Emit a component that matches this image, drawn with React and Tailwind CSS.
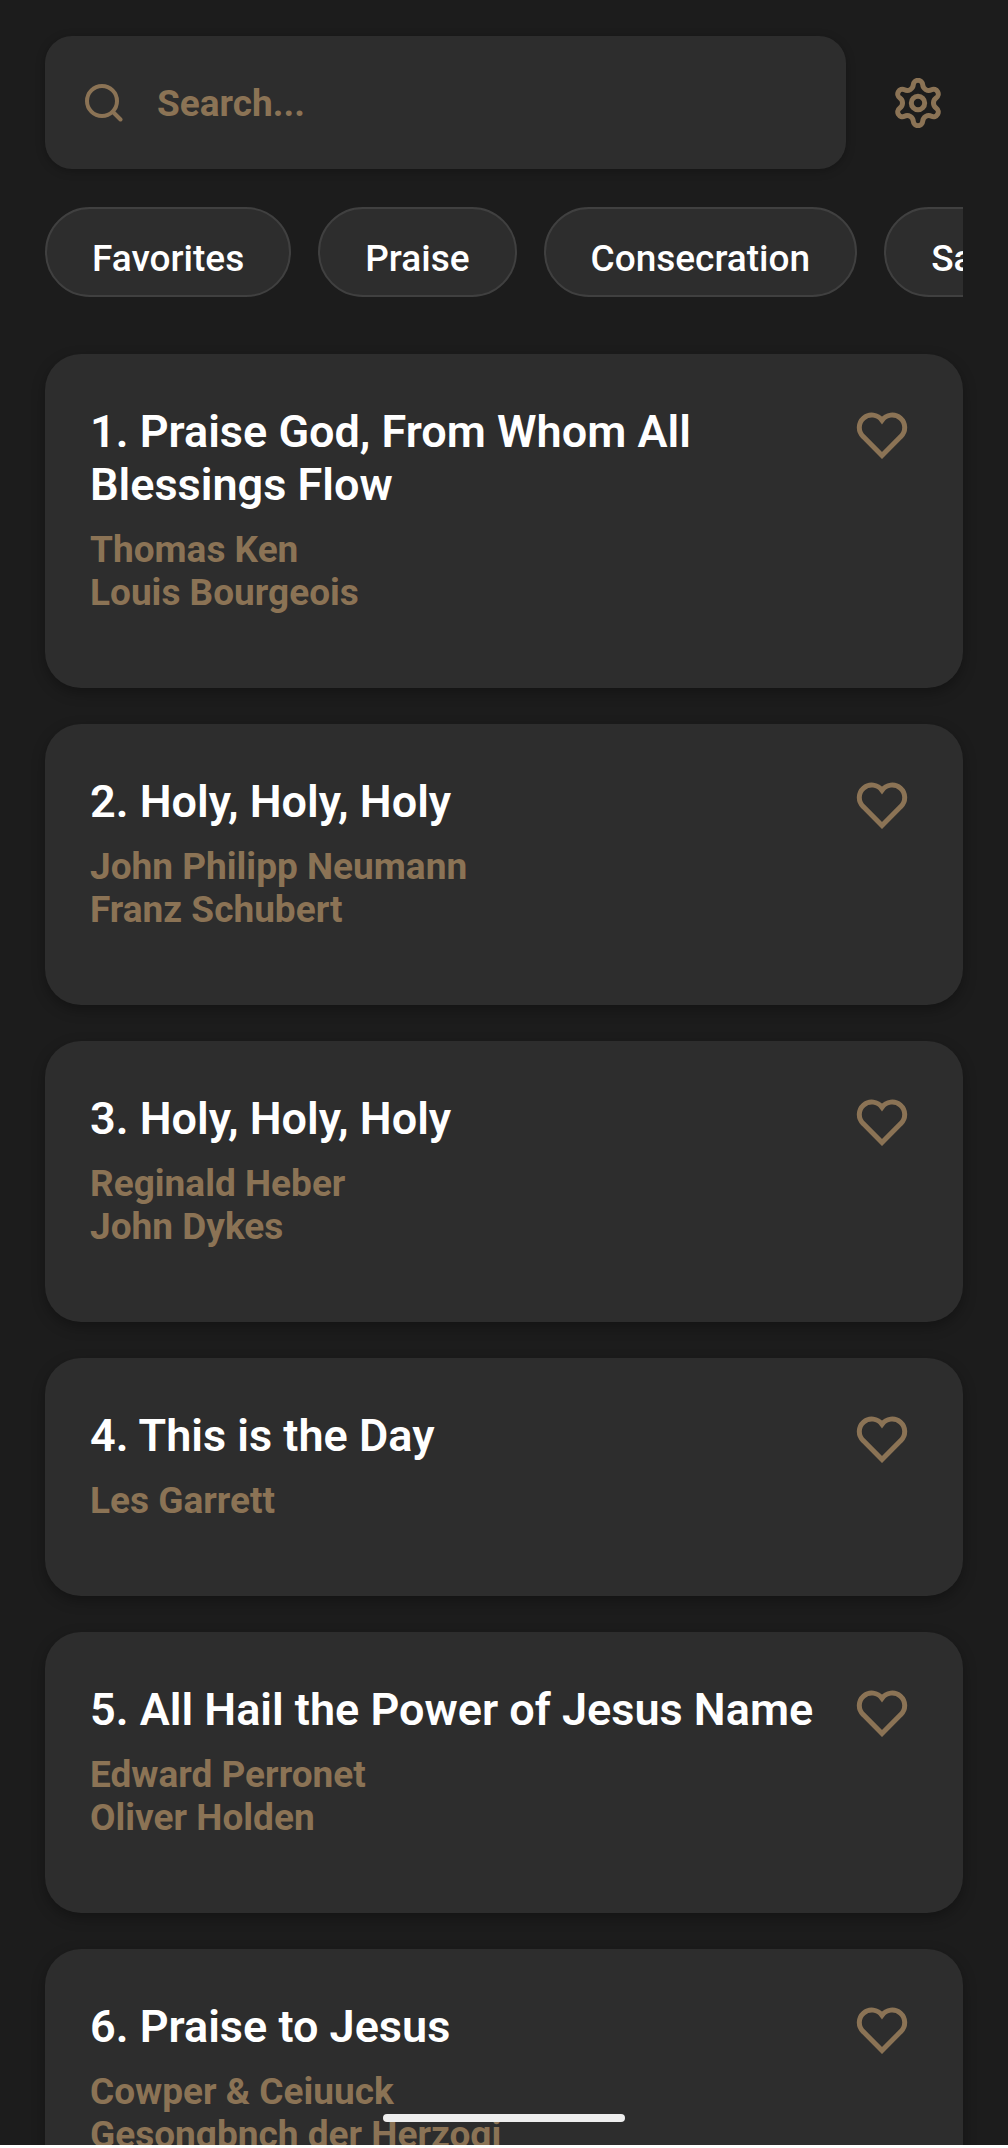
import React from "react";

const hymns = [
  { title: "1. Praise God, From Whom All Blessings Flow", authors: ["Thomas Ken", "Louis Bourgeois"] },
  { title: "2. Holy, Holy, Holy", authors: ["John Philipp Neumann", "Franz Schubert"] },
  { title: "3. Holy, Holy, Holy", authors: ["Reginald Heber", "John Dykes"] },
  { title: "4. This is the Day", authors: ["Les Garrett"] },
  { title: "5. All Hail the Power of Jesus Name", authors: ["Edward Perronet", "Oliver Holden"] },
  { title: "6. Praise to Jesus", authors: ["Cowper & Ceiuuck", "Gesongbnch der Herzogi"] },
];

const categories = ["Favorites", "Praise", "Consecration", "Salvation"];

function SearchIcon() {
  return (
    <svg viewBox="0 0 38 38" className="size-[38px] shrink-0" fill="none" stroke="currentColor" strokeWidth="4" strokeLinecap="round" aria-hidden="true">
      <circle cx="17" cy="17" r="15" />
      <path d="M28 28l7.500 7.500" />
    </svg>
  );
}

function GearIcon() {
  return (
    <svg viewBox="-25 -25 50 50" className="size-[50px]" fill="none" stroke="currentColor" strokeWidth="5" strokeLinejoin="round" aria-hidden="true">
      <circle r="6.700" />
      <path d="M18.210 -5.100A6.140 6.140 0 0 0 18.210 5.100A4.700 4.700 0 0 1 13.520 13.220A6.140 6.140 0 0 0 4.690 18.320A4.700 4.700 0 0 1 -4.690 18.320A6.140 6.140 0 0 0 -13.520 13.220A4.700 4.700 0 0 1 -18.210 5.100A6.140 6.140 0 0 0 -18.210 -5.100A4.700 4.700 0 0 1 -13.520 -13.220A6.140 6.140 0 0 0 -4.690 -18.320A4.700 4.700 0 0 1 4.690 -18.320A6.140 6.140 0 0 0 13.520 -13.220A4.700 4.700 0 0 1 18.210 -5.100Z" />
    </svg>
  );
}

function HeartIcon() {
  return (
    <svg viewBox="5 0 54 54" className="size-[54px]" fill="none" stroke="currentColor" strokeWidth="5" aria-hidden="true">
      <path d="M32 50.500L13.200 31.600A12.500 12.500 0 1 1 32 15.300A12.500 12.500 0 1 1 50.800 31.600Z" />
    </svg>
  );
}

function HymnCard({ title, authors }) {
  return (
    <li className="flex items-start gap-4 rounded-[36px] bg-[#2d2d2d] px-[45px] pt-[51px] pb-[74px] shadow-[0_5px_14px_rgba(0,0,0,0.3)]">
      <div className="min-w-0 flex-1">
        <h2 className="text-[45px] leading-[53px] font-semibold text-white">{title}</h2>
        <div className="mt-[17px] text-[37px] leading-[43px] font-bold text-[#8b7355]">
          {authors.map((a) => (
            <p key={a}>{a}</p>
          ))}
        </div>
      </div>
      <button type="button" aria-label={"Add " + title + " to favorites"} className="mr-[9px] shrink-0 text-[#8b7355]">
        <HeartIcon />
      </button>
    </li>
  );
}

export default function App() {
  return (
    <div className="h-screen bg-white pb-[3px] font-['Roboto',sans-serif]">
      <main className="relative flex h-full flex-col overflow-hidden bg-[#1c1c1c] px-[45px] pt-9">
        <div className="flex shrink-0 items-center">
          <label className="flex h-[133px] min-w-0 flex-1 items-center gap-[34px] rounded-[27px] bg-[#2d2d2d] px-10 text-[#8b7355] shadow-[0_2px_10px_rgba(0,0,0,0.25)]">
            <SearchIcon />
            <input type="text" aria-label="Search" placeholder="Search..." className="min-w-0 flex-1 bg-transparent pt-0.5 text-[37px] font-bold text-[#8b7355] outline-none placeholder:text-[#8b7355]" />
          </label>
          <button type="button" aria-label="Settings" className="mr-5 ml-[47px] shrink-0 text-[#8b7355]">
            <GearIcon />
          </button>
        </div>
        <nav aria-label="Categories" className="mt-[38px] flex shrink-0 gap-[27px] overflow-hidden">
          {categories.map((c) => (
            <button key={c} type="button" className="h-[90px] shrink-0 rounded-full border-2 border-[#404040] bg-[#2d2d2d] px-[45px] pt-[14px] text-[37px] font-medium text-white">
              {c}
            </button>
          ))}
        </nav>
        <ul className="mt-[57px] flex flex-col gap-9">
          {hymns.map((h) => (
            <HymnCard key={h.title} title={h.title} authors={h.authors} />
          ))}
        </ul>
        <div className="absolute bottom-[23px] left-1/2 h-2 w-[242px] -translate-x-1/2 rounded-full bg-[#eeeeee]" />
      </main>
    </div>
  );
}
